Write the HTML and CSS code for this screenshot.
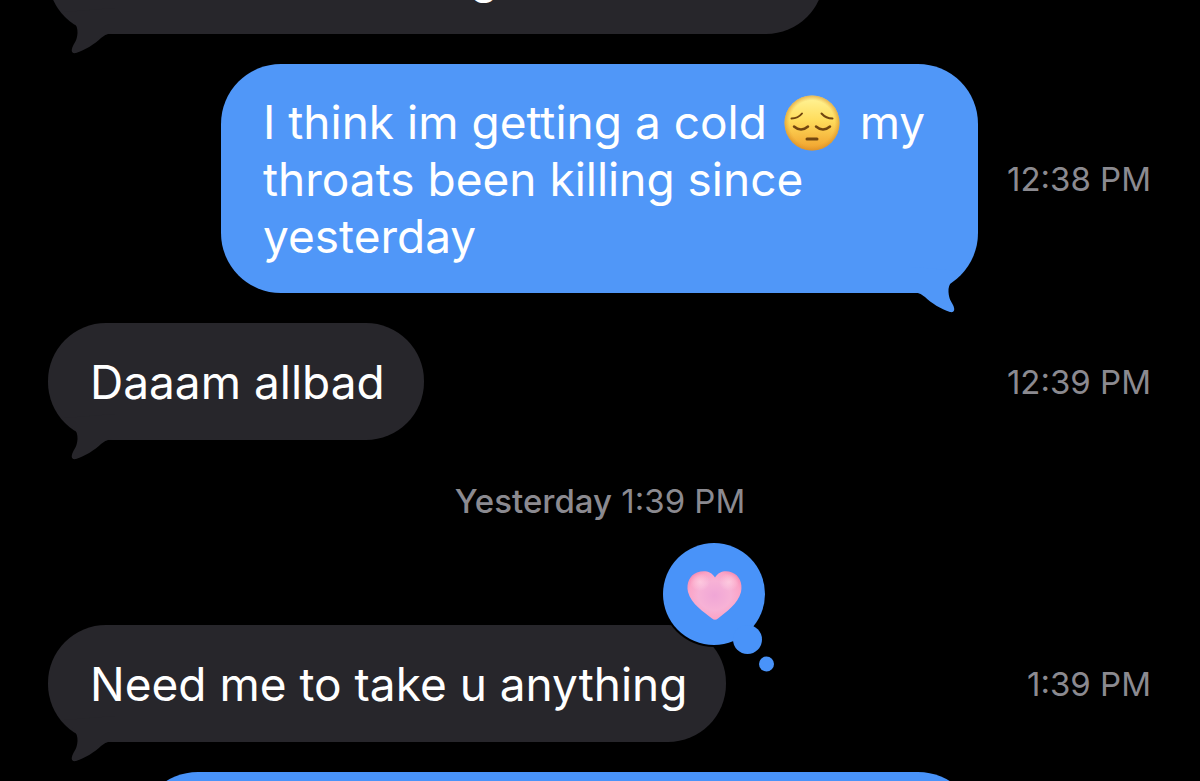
FILE: index.html
```html
<!DOCTYPE html>
<html lang="en">
  <head>
    <meta charset="UTF-8" />
    <meta name="viewport" content="width=device-width, initial-scale=1.0" />
    <title>Messages</title>
    <link rel="stylesheet" href="styles.css" />
  </head>
  <body>
    <svg class="defs" aria-hidden="true">
      <symbol id="tail" viewBox="0 0 68 46">
        <path d="M16 4C25 13 30 16 29.500 25C29 32 27 34 25 38C23 42 23 46 28 45C37 42 47 36 53 30C57 27 60 25 67 25V0Z" />
      </symbol>
    </svg>

    <main class="chat">
      <div class="message received">
        <div class="bubble previous">g<svg class="tail"><use href="#tail" /></svg></div>
      </div>

      <div class="message sent">
        <div class="bubble tall">
          I think im getting a cold
          <svg class="emoji" viewBox="0 0 56 56" role="img" aria-label="Pensive face">
            <defs>
              <linearGradient id="face" x1="0" y1="0" x2="0" y2="1">
                <stop offset="0" stop-color="#fff59a" />
                <stop offset="0.45" stop-color="#ffdc5c" />
                <stop offset="1" stop-color="#f0a02c" />
              </linearGradient>
              <radialGradient id="shade">
                <stop offset="0.82" stop-color="#e29a2c" stop-opacity="0" />
                <stop offset="1" stop-color="#d48a26" stop-opacity="0.6" />
              </radialGradient>
            </defs>
            <circle cx="28" cy="28" r="27.500" fill="url(#face)" />
            <circle cx="28" cy="28" r="27.500" fill="url(#shade)" />
            <g fill="none" stroke="#71450f" stroke-width="2" stroke-linecap="round">
              <path d="M7.500 23.500Q14 23.500 18 18.500M37.500 18.500Q42 23.500 48.500 23.500" />
              <path d="M10 31.500Q17 37.500 24 31.500M32 31.500Q39 37.500 46 31.500" stroke-width="2.500" />
              <path d="M23 44H33" stroke-width="3" />
            </g>
          </svg>
          my throats been killing since yesterday
          <svg class="tail"><use href="#tail" /></svg>
        </div>
        <time class="time">12:38 PM</time>
      </div>

      <div class="message received">
        <div class="bubble">Daaam allbad<svg class="tail"><use href="#tail" /></svg></div>
        <time class="time">12:39 PM</time>
      </div>

      <p class="divider"><strong>Yesterday</strong> 1:39 PM</p>

      <div class="message received">
        <div class="bubble">
          Need me to take u anything
          <svg class="tail"><use href="#tail" /></svg>
          <svg class="reaction" viewBox="0 0 120 136" role="img" aria-label="Pink heart">
            <defs>
              <radialGradient id="heart" cx="0.5" cy="0.5" r="0.6">
                <stop offset="0" stop-color="#f0a6d6" />
                <stop offset="0.5" stop-color="#f7b2d6" />
                <stop offset="0.8" stop-color="#fba4c6" />
                <stop offset="1" stop-color="#f58ab2" />
              </radialGradient>
              <radialGradient id="shine">
                <stop offset="0" stop-color="#ffd6e6" stop-opacity="0.7" />
                <stop offset="1" stop-color="#ffd6e6" stop-opacity="0" />
              </radialGradient>
            </defs>
            <circle cx="55" cy="54" r="53" fill="#000" />
            <g fill="#4993f9">
              <circle cx="55" cy="54" r="51" />
              <circle cx="88.500" cy="99.500" r="14.500" />
              <circle cx="107.500" cy="124" r="7.500" />
            </g>
            <path d="M56 37.500C60 31 67 30 73 32.500C80 35 84 43 82 52C79 64 67 72 59 78.500Q56 81 53 78.500C45 72 32 64 29 52C27 43 31 35 38 32.500C45 30 52 31 56 37.500Z" fill="url(#heart)" />
            <ellipse cx="41" cy="42" rx="10" ry="9" fill="url(#shine)" />
            <ellipse cx="70" cy="42" rx="10" ry="9" fill="url(#shine)" />
          </svg>
        </div>
        <time class="time">1:39 PM</time>
      </div>

      <div class="message sent">
        <div class="bubble tall next"></div>
      </div>
    </main>
  </body>
</html>
```
FILE: styles.css
```css
body {
  margin: 0;
  background-color: #000;
  color: #fff;
  font-family: Inter, "Liberation Sans", sans-serif;
}
.defs {
  display: none;
}
.chat {
  display: flex;
  flex-direction: column;
  justify-content: flex-start;
  gap: 30px;
  height: 100vh;
  overflow: hidden;
}
.message {
  display: grid;
  grid-template-columns: 1fr 144px;
  column-gap: 29px;
  align-items: center;
  flex-shrink: 0;
  padding: 0 49px 0 48px;
}
/* the list is scrolled part way into the first message */
.message:first-child {
  margin-top: -83px;
}
.bubble {
  position: relative;
  box-sizing: border-box;
  max-width: 776px;
  padding: 31px 39px 29px 42px;
  border-radius: 58px;
  font-size: 46px;
  line-height: 57px;
}
.received .bubble {
  justify-self: start;
  background-color: #27262b;
  color: #fff;
}
.sent .bubble {
  justify-self: end;
  background-color: #5097f8;
}
.sent .tall {
  max-width: 757px;
  padding: 30px 42px 28px;
  border-radius: 60px;
}
.received .previous {
  width: 100%;
  padding-left: 422px;
}
.sent .next {
  width: 100%;
  max-width: 840px;
  height: 229px;
  background-color: #4993f9;
}
.tail {
  position: absolute;
  left: 0;
  bottom: -20px;
  width: 68px;
  height: 46px;
  fill: #27262b;
}
.sent .tail {
  left: auto;
  right: 0;
  fill: #5097f8;
  transform: scaleX(-1);
}
.emoji {
  width: 56px;
  height: 56px;
  margin: -8px 7px -8px 4px;
  vertical-align: -4px;
}
.reaction {
  position: absolute;
  top: -85px;
  right: -53px;
  width: 120px;
  height: 136px;
}
.time,
.divider {
  color: #8b8a90;
  font-size: 33px;
  line-height: 40px;
  white-space: nowrap;
}
.time {
  justify-self: end;
}
.divider {
  margin: 11px 0 74px;
  text-align: center;
}
.divider strong {
  font-weight: 500;
}
```
